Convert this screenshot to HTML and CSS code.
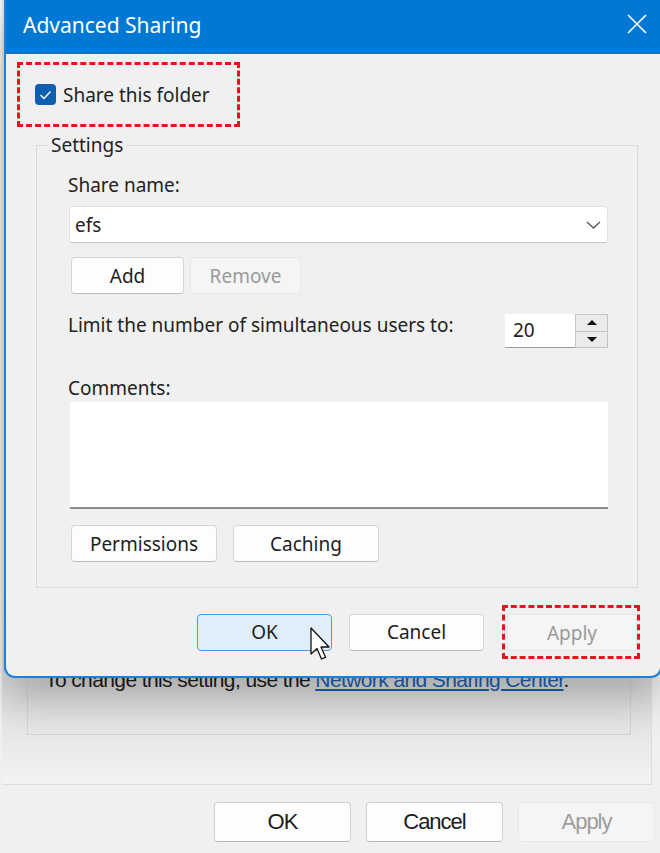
FILE: index.html
```html
<!DOCTYPE html>
<html lang="en">
  <head>
    <meta charset="UTF-8" />
    <meta name="viewport" content="width=device-width, initial-scale=1.0" />
    <title>Advanced Sharing</title>
    <link rel="stylesheet" href="styles.css">
  </head>
  <body>
    <!-- properties window behind the dialog -->
    <div class="back">
      <div class="back-panel">
        <div class="back-group">
          <p class="back-note">To change this setting, use the <a href="#">Network and Sharing Center</a>.</p>
        </div>
      </div>
      <div class="back-footer">
        <button class="back-btn">OK</button>
        <button class="back-btn">Cancel</button>
        <button class="back-btn" disabled>Apply</button>
      </div>
    </div>

    <div class="dialog">
      <div class="titlebar">
        <span class="title">Advanced Sharing</span>
        <svg class="close" width="20" height="20" viewBox="0 0 20 20">
          <path d="M1 1 L19 19 M19 1 L1 19" stroke="#fff" stroke-width="1.6" fill="none" />
        </svg>
      </div>

      <div class="dialog-body">
        <div class="mark mark-share">
          <label class="check">
            <span class="check-box">
              <svg width="13" height="10" viewBox="0 0 13 10">
                <path d="M1.5 5 L5 8.5 L11.5 1.5" stroke="#fff" stroke-width="1.3" fill="none" />
              </svg>
            </span>
            Share this folder
          </label>
        </div>

        <fieldset class="settings">
          <legend>Settings</legend>
          <div class="field-label">Share name:</div>
          <div class="combo">
            <span>efs</span>
            <svg width="15" height="8" viewBox="0 0 15 8">
              <path d="M1 1 L7.5 7 L14 1" stroke="#555" stroke-width="1.3" fill="none" />
            </svg>
          </div>
          <div class="btn-row">
            <button class="btn btn-add">Add</button>
            <button class="btn btn-remove" disabled>Remove</button>
          </div>
          <div class="limit-row">
            <span>Limit the number of simultaneous users to:</span>
            <div class="spinner">
              <span class="spin-value">20</span>
              <div class="spin-arrows">
                <span class="spin-up"></span>
                <span class="spin-down"></span>
              </div>
            </div>
          </div>
          <div class="field-label comments-label">Comments:</div>
          <div class="comments"></div>
          <div class="btn-row btn-row-wide">
            <button class="btn btn-wide">Permissions</button>
            <button class="btn btn-wide">Caching</button>
          </div>
        </fieldset>

        <div class="dialog-footer">
          <button class="btn btn-footer btn-ok">OK</button>
          <button class="btn btn-footer">Cancel</button>
          <div class="mark mark-apply">
            <button class="btn btn-footer btn-apply" disabled>Apply</button>
          </div>
        </div>
      </div>

      <svg class="cursor" width="24" height="34" viewBox="0 0 24 34">
        <path d="M1 1 L1 27 L7 21.5 L11.5 32 L15.5 30.3 L11 20 L19 20 Z" fill="#fff" stroke="#111" stroke-width="1.3" stroke-linejoin="round" />
      </svg>
    </div>
  </body>
</html>
```

FILE: styles.css
```css
body {
  margin: 0;
  padding: 0;
  width: 660px;
  height: 853px;
  overflow: hidden;
  background-color: #f0f0f0;
  font-family: "Noto Sans", "Open Sans", sans-serif;
  color: #222;
  position: relative;
}

button {
  font-family: inherit;
  cursor: default;
}

/* ---- window behind ---- */

.back-panel {
  margin-left: 2px;
  width: 650px;
  height: 785px;
  box-sizing: border-box;
  padding: 600px 20px 0 25px;
  border-right: 1px solid #dcdcdc;
  border-bottom: 1px solid #dcdcdc;
  background: linear-gradient(#e0e0e0 75%, #d8d8d8 85%, #f3f3f3);
}

.back-group {
  height: 135px;
  box-sizing: border-box;
  padding: 66px 0 0 17px;
  border: 1px solid #d2d2d2;
}

.back-note {
  margin: 0;
  font-family: "Liberation Sans", sans-serif;
  font-size: 21px;
  letter-spacing: -0.6px;
  line-height: 26px;
  color: #1b1b1b;
}

.back-note a {
  color: #1a5fb4;
}

.back-footer {
  display: flex;
  justify-content: flex-end;
  gap: 15px;
  padding: 17px 5px 0 0;
}

.back-btn {
  width: 137px;
  height: 40px;
  background-color: #fdfdfd;
  border: 1px solid #d0d0d0;
  border-bottom-color: #b8b8b8;
  border-radius: 4px;
  font-family: "Liberation Sans", sans-serif;
  font-size: 22px;
  letter-spacing: -1px;
  color: #1b1b1b;
}

.back-btn:disabled {
  background-color: #f5f5f5;
  border-color: #e8e8e8;
  color: #9d9d9d;
}

/* ---- advanced sharing dialog ---- */

.dialog {
  position: absolute;
  top: 0;
  left: 4px;
  width: 658px;
  height: 678px;
  box-sizing: border-box;
  border: 2px solid #1b80d8;
  border-top: none;
  border-radius: 0 0 11px 11px;
  background-color: #f0f0f0;
  box-shadow: 0 22px 40px rgba(0, 0, 0, 0.22);
}

.titlebar {
  height: 54px;
  display: flex;
  align-items: center;
  justify-content: space-between;
  padding: 0 13px 0 17px;
  background-color: #0078d4;
}

.title {
  color: #fff;
  font-size: 21px;
  margin-top: -4px;
}

.close {
  display: block;
  margin-top: -6px;
}

.dialog-body {
  padding: 8px 0 0 11px;
}

.mark {
  border: 3px dashed #e8141b;
  box-sizing: border-box;
}

.mark-share {
  width: 223px;
  height: 65px;
  display: flex;
  align-items: center;
  padding-left: 15px;
}

.check {
  display: flex;
  align-items: center;
  gap: 7px;
  font-size: 19px;
}

.check-box {
  width: 21px;
  height: 21px;
  border-radius: 4px;
  background-color: #0f5fb0;
  display: flex;
  align-items: center;
  justify-content: center;
}

.settings {
  margin: 6px 22px 0 19px;
  padding: 0 29px 25px 31px;
  border: 1px solid #d9d9d9;
}

.settings legend {
  margin-left: -21px;
  padding: 0 4px;
  font-size: 19px;
  line-height: 24px;
}

.field-label {
  margin-top: 16px;
  font-size: 19px;
  line-height: 24px;
}

.combo {
  margin: 9px 0 0 1px;
  height: 37px;
  box-sizing: border-box;
  display: flex;
  align-items: center;
  justify-content: space-between;
  padding: 0 6px 0 5px;
  background-color: #fff;
  border: 1px solid #e3e3e3;
  border-bottom-color: #c8c8c8;
  border-radius: 3px;
  font-size: 19px;
}

.btn-row {
  display: flex;
  gap: 6px;
  margin: 14px 0 0 3px;
}

.btn {
  height: 37px;
  box-sizing: border-box;
  background-color: #fdfdfd;
  border: 1px solid #d5d5d5;
  border-bottom-color: #bdbdbd;
  border-radius: 4px;
  font-size: 19px;
  color: #1e1e1e;
  padding: 0;
}

.btn-add {
  width: 113px;
}

.btn-remove {
  width: 111px;
}

.btn:disabled {
  background-color: #f5f5f5;
  border-color: #e6e6e6;
  color: #9a9a9a;
}

.limit-row {
  display: flex;
  justify-content: space-between;
  align-items: flex-start;
  margin-top: 19px;
  font-size: 19px;
  line-height: 24px;
}

.spinner {
  display: flex;
  margin-top: 1px;
  height: 34px;
}

.spin-value {
  width: 70px;
  box-sizing: border-box;
  padding: 4px 0 0 8px;
  background-color: #fff;
  border-bottom: 1px solid #9a9a9a;
}

.spin-arrows {
  width: 33px;
  box-sizing: border-box;
  display: flex;
  flex-direction: column;
  border: 1px solid #c4c4c4;
  background-color: #ebebeb;
}

.spin-up,
.spin-down {
  flex: 1;
  display: flex;
  align-items: center;
  justify-content: center;
}

.spin-up {
  border-bottom: 1px solid #c4c4c4;
}

.spin-up::after {
  content: "";
  border-left: 5px solid transparent;
  border-right: 5px solid transparent;
  border-bottom: 5px solid #111;
}

.spin-down::after {
  content: "";
  border-left: 5px solid transparent;
  border-right: 5px solid transparent;
  border-top: 5px solid #111;
}

.comments-label {
  margin-top: 28px;
}

.comments {
  margin: 2px 0 0 2px;
  height: 107px;
  box-sizing: border-box;
  background-color: #fff;
  border-bottom: 2px solid #8c8c8c;
}

.btn-row-wide {
  gap: 16px;
  margin-top: 16px;
}

.btn-wide {
  width: 146px;
}

.dialog-footer {
  display: flex;
  justify-content: flex-end;
  align-items: center;
  margin-top: 17px;
  padding-right: 20px;
}

.btn-footer {
  width: 135px;
}

.btn-ok {
  margin-right: 17px;
  background-color: #e0eefa;
  border: 1.5px solid #4c9be0;
}

.mark-apply {
  margin-left: 18px;
  padding: 6px 0 5px 2px;
}

.btn-apply {
  width: 130px;
}

.cursor {
  position: absolute;
  left: 304px;
  top: 627px;
}
```
